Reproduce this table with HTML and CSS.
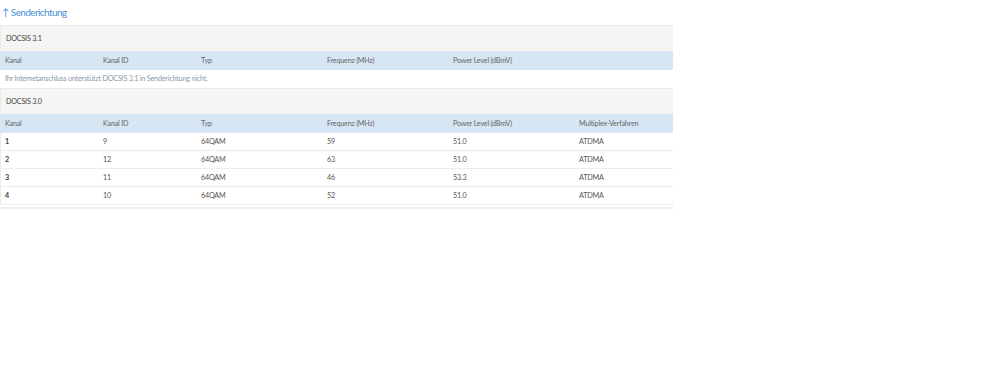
FILE: index.html
```html
<!DOCTYPE html>
<html lang="de">
<head>
    <meta charset="UTF-8">
    <title>Senderichtung</title>
    <link rel="stylesheet" href="styles.css">
</head>
<body>
    <h2 class="title">↑ Senderichtung</h2>
    <div class="channels">
        <div class="section">DOCSIS 3.1</div>
        <div class="row head">
            <span>Kanal</span><span>Kanal ID</span><span>Typ</span><span>Frequenz (MHz)</span><span>Power Level (dBmV)</span><span></span>
        </div>
        <div class="note">Ihr Internetanschluss unterstützt DOCSIS 3.1 in Senderichtung nicht.</div>
        <div class="section">DOCSIS 3.0</div>
        <div class="row head">
            <span>Kanal</span><span>Kanal ID</span><span>Typ</span><span>Frequenz (MHz)</span><span>Power Level (dBmV)</span><span>Multiplex-Verfahren</span>
        </div>
        <div class="rows">
            <div class="row"><b>1</b><span>9</span><span>64QAM</span><span>59</span><span>51.0</span><span>ATDMA</span></div>
            <div class="row"><b>2</b><span>12</span><span>64QAM</span><span>63</span><span>51.0</span><span>ATDMA</span></div>
            <div class="row"><b>3</b><span>11</span><span>64QAM</span><span>46</span><span>53.3</span><span>ATDMA</span></div>
            <div class="row"><b>4</b><span>10</span><span>64QAM</span><span>52</span><span>51.0</span><span>ATDMA</span></div>
        </div>
        <div class="foot"></div>
    </div>
</body>
</html>
```

FILE: styles.css
```css
body {
    margin: 0;
    background: #fff;
    font-family: 'Lato', 'Open Sans', sans-serif;
    font-size: 7.2px;
    letter-spacing: -0.2px;
    color: #555;
}

.title {
    margin: 0;
    padding: 6px 0 0 2px;
    height: 19px;
    font-size: 10px;
    font-weight: normal;
    letter-spacing: -0.6px;
    color: #4a8fd6;
}

.channels {
    width: 673px;
}

.section {
    height: 25px;
    line-height: 25px;
    padding-left: 5px;
    background-color: #f5f5f3;
    border-top: 1px solid #ebebea;
    border-left: 1px solid #ebebea;
    color: #444;
}

.row {
    display: grid;
    grid-template-columns: 98px 98px 126px 126px 126px 1fr;
    height: 18px;
    line-height: 18px;
    padding-left: 5px;
}

.row.head {
    height: 19px;
    line-height: 19px;
    background-color: #d6e6f5;
    color: #666;
}

.note {
    height: 18px;
    line-height: 18px;
    padding-left: 5px;
    color: #8a9aa8;
}

.rows {
    border-left: 1px solid #ebebea;
}

.rows .row {
    height: 17px;
    line-height: 18px;
    padding-left: 4px;
    border-bottom: 1px solid #ececec;
}

.rows .row b {
    color: #33404d;
}

.foot {
    margin-top: 2px;
    border-top: 2px solid #eeeeee;
}
```
